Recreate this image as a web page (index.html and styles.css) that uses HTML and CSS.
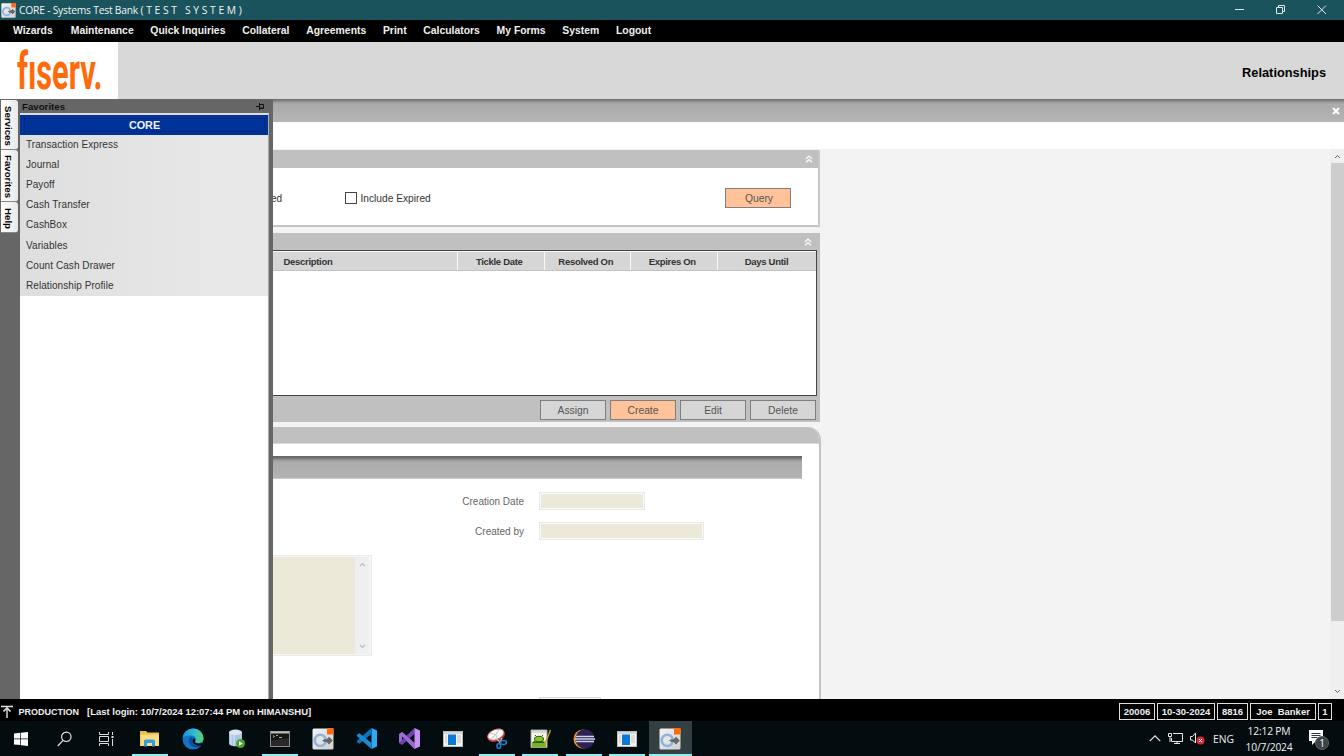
FILE: index.html
```html
<!DOCTYPE html>
<html lang="en">
<head>
  <meta charset="UTF-8">
  <title>CORE - Systems Test Bank</title>
  <link rel="stylesheet" href="styles.css">
</head>
<body>
  <svg width="0" height="0" class="defs">
    <defs>
      <linearGradient id="edgeGreen" x1="0" y1="0" x2="1" y2="0">
        <stop offset="0" stop-color="#1b8fd8"/><stop offset=".6" stop-color="#35bdd0"/><stop offset="1" stop-color="#5fd45a"/>
      </linearGradient>
      <linearGradient id="coreGrey" x1="0" y1="0" x2="1" y2="1">
        <stop offset="0" stop-color="#f4f4f4"/><stop offset="1" stop-color="#cfcfcf"/>
      </linearGradient>
      <symbol id="core" viewBox="0 0 22 22">
        <rect x=".5" y=".5" width="21" height="21" rx="1.5" fill="url(#coreGrey)"/>
        <circle cx="8.3" cy="12.4" r="5.6" fill="none" stroke="#8fb4dc" stroke-width="2.6"/>
        <path d="M10 12.500 13 11l1.500.5 2.500-2.700 3.800 3.700-3.800 3.900-2.500-2.600-1.500.5z" fill="#666"/>
        <rect x="15" y="0" width="6.500" height="6.500" fill="#ff6a0a"/>
      </symbol>
      <symbol id="window" viewBox="0 0 20 16">
        <rect x=".5" y=".5" width="19" height="15" fill="#f3f3f3" stroke="#bcbcbc"/>
        <rect x="1" y="1" width="18" height="2" fill="#d5d5d5"/>
        <rect x="5" y="3.500" width="8" height="10.500" fill="#0f78d4"/>
        <path d="M2 5h2M2 7h2M2 9h2M2 11h2M14 5h4M14 7h4M14 9h4M14 11h4" stroke="#c4c4c4"/>
      </symbol>
      <symbol id="chevrons" viewBox="0 0 8 8">
        <path d="M1 3.700 4 1l3 2.700M1 7.200 4 4.500l3 2.700" fill="none" stroke="#fff" stroke-width="1.300"/>
      </symbol>
    </defs>
  </svg>

  <div class="titlebar">
    <svg class="app-icon" width="15" height="15"><use href="#core"/></svg>
    <span class="title">CORE - Systems Test Bank <span class="spaced">( T E S T &nbsp; S Y S T E M )</span></span>
    <svg class="window-buttons" width="110" height="20" fill="none" stroke="#dfe8ea">
      <path d="M1 9.500h9M42.500 7.500h6v6h-6zM44.500 7.500v-2h6v6h-2M83.500 5.500l8.500 8.500M92 5.500 83.500 14"/>
    </svg>
  </div>

  <div class="menubar">
    <span>Wizards</span><span>Maintenance</span><span>Quick Inquiries</span><span>Collateral</span><span>Agreements</span><span>Print</span><span>Calculators</span><span>My Forms</span><span>System</span><span>Logout</span>
  </div>

  <div class="brand">
    <div class="logo"><span>fıserv.</span></div>
    <h1>Relationships</h1>
  </div>

  <div class="workspace">
    <div class="rail">
      <div class="tab services">Services</div>
      <div class="tab favs">Favorites</div>
      <div class="tab help">Help</div>
    </div>

    <div class="favorites">
      <div class="fav-head">
        <span>Favorites</span>
        <svg width="8" height="7" fill="none" stroke="#111"><path d="M0 3.500h3M3.500 0v7M3.500 1.500h4v3.500h-4M3.500 5.500h4"/></svg>
      </div>
      <div class="fav-body">
        <div class="fav-title"><span>CORE</span></div>
        <ul>
          <li>Transaction Express</li>
          <li>Journal</li>
          <li>Payoff</li>
          <li>Cash Transfer</li>
          <li>CashBox</li>
          <li>Variables</li>
          <li>Count Cash Drawer</li>
          <li>Relationship Profile</li>
        </ul>
      </div>
    </div>

    <div class="main">
      <div class="main-bar">
        <svg width="8" height="8" stroke="#fff" stroke-width="2"><path d="M1 1l6 6M7 1 1 7"/></svg>
      </div>
      <div class="blank"></div>
      <div class="scroll-area">
        <div class="panels">
          <div class="panel filter">
            <div class="panel-head"><svg width="8" height="8"><use href="#chevrons"/></svg></div>
            <div class="filter-row">
              <span class="cut">ed</span>
              <span class="check"></span>
              <span class="check-label">Include Expired</span>
              <span class="btn primary">Query</span>
            </div>
          </div>

          <div class="panel list">
            <div class="panel-head"><svg width="8" height="8"><use href="#chevrons"/></svg></div>
            <div class="grid">
              <div class="grid-head">
                <div class="desc">Description</div>
                <div>Tickle Date</div>
                <div>Resolved On</div>
                <div>Expires On</div>
                <div>Days Until</div>
              </div>
            </div>
            <div class="actions">
              <span class="btn">Assign</span>
              <span class="btn primary">Create</span>
              <span class="btn">Edit</span>
              <span class="btn">Delete</span>
            </div>
          </div>

          <div class="detail">
            <div class="detail-head"></div>
            <div class="section-bar"></div>
            <div class="field first"><label>Creation Date</label><div class="input"></div></div>
            <div class="field"><label>Created by</label><div class="input wide"></div></div>
            <div class="textarea">
              <div class="text"></div>
              <div class="text-scroll">
                <svg width="7" height="5" fill="none" stroke="#bbb" stroke-width="1.200"><path d="M1 4l2.500-2.500L6 4"/></svg>
                <svg width="7" height="5" fill="none" stroke="#bbb" stroke-width="1.200"><path d="M1 1l2.500 2.500L6 1"/></svg>
              </div>
            </div>
            <div class="stub"></div>
          </div>
        </div>

        <div class="scrollbar">
          <svg width="7" height="5" fill="none" stroke="#666"><path d="M1 4l2.500-2.500L6 4"/></svg>
          <div class="thumb"></div>
          <svg width="7" height="5" fill="none" stroke="#666"><path d="M1 1l2.500 2.500L6 1"/></svg>
        </div>
      </div>
    </div>
  </div>

  <div class="statusbar">
    <svg width="14" height="14" fill="none" stroke="#e4e4e4"><path d="M1 1.500h12M7 3v10" stroke-width="1.400"/><path d="M3.500 6.500 7 3l3.500 3.500" stroke-width="1.600"/></svg>
    <span class="env">PRODUCTION</span>
    <span class="login">[Last login: 10/7/2024 12:07:44 PM on HIMANSHU]</span>
    <div class="boxes">
      <span class="b1">20006</span><span class="b2">10-30-2024</span><span class="b3">8816</span><span class="b4">Joe&nbsp; Banker</span><span class="b5">1</span>
    </div>
  </div>

  <div class="taskbar">
    <div class="task sys"><svg width="14" height="14" fill="#fff"><path d="M0 1.500 6.300.8v5.800H0zM7 .7 14 0v6.600H7zM0 7.300h6.300v5.800L0 12.400zM7 7.300h7V14l-7-.8z"/></svg></div>
    <div class="task sys"><svg width="15" height="16" fill="none" stroke="#e6e6e6" stroke-width="1.200"><circle cx="9.300" cy="5.800" r="4.700"/><path d="M6 9.300.8 15"/></svg></div>
    <div class="task sys"><svg width="15" height="14" fill="none" stroke="#ddd"><path d="M.5 0v2.500h9V0M.5 4.500h9v5h-9zM.5 14v-2.500h9V14M13.500 0v3M13.500 7v7"/><path d="M12.500 5h2" stroke-width="2"/></svg></div>
    <div class="task open">
      <svg width="20" height="17"><path d="M0 1h6l1.500 1.500H19V16H0z" fill="#f0bd45"/><path d="M.5 4.500h18.500V16H.500z" fill="#fbdc80"/><path d="M4 16.500V11q0-1.500 1.500-1.500h8Q15 9.500 15 11v5.500h-3V13H7v3.500z" fill="#2f9fe0"/></svg>
    </div>
    <div class="task">
      <svg width="22" height="22" viewBox="0 0 22 22"><circle cx="11" cy="11" r="10.500" fill="#1673c4"/><path d="M.6 10C1.500 4 6 .5 11 .5 17 .5 21.500 5 21.500 10c0 3.500-2.500 5-5.300 5-2.500 0-3.200-1-2.700-2 1.500-3-1-5.500-4.500-5.500-4 0-7.500 1-8.400 2.500z" fill="url(#edgeGreen)"/><path d="M8.500 9C5.500 12 7 18.500 13 19.300c2.500.3 5-.6 6.500-2-5 1.300-9.500-1-9.500-4.300 0-1 .4-1.600.8-2.200-.3-1.300-1.200-2-2.300-1.800z" fill="#0b4f9c"/><path d="M10.500 12.500c.3-2 1.800-2.300 2.500-1.500.8.900.1 2-.2 2.500-.3 1.200 1.500 2.200 4.500 2l4-1-1.500 2.800c-4 1.500-9.300-.8-9.300-4.800z" fill="#030d10"/></svg>
    </div>
    <div class="task">
      <svg width="18" height="20"><path d="M1 3.500v11c0 1.500 3 2.700 6.500 2.700s6.500-1.200 6.500-2.700v-11z" fill="#a9c5e2"/><path d="M3 4v12M6 5v12" stroke="#c9dcf0" stroke-width="1.500"/><ellipse cx="7.500" cy="3.300" rx="6.500" ry="2.700" fill="#dbe7f3"/><circle cx="12.500" cy="14.500" r="4.500" fill="#49a52f"/><path d="M11 12.200v4.600l3.800-2.300z" fill="#fff"/></svg>
    </div>
    <div class="task open">
      <svg width="20" height="16"><rect x=".5" y=".5" width="19" height="15" fill="#151515" stroke="#8d8d8d"/><path d="M1 1.500h18" stroke="#bcbcbc" stroke-width="2"/><path d="M3 4.500l1.500 1L3 6.500M6 4.500h2M9 6.500h3" fill="none" stroke="#ccc" stroke-width=".8"/><path d="M1 9.500 19 7v8H1z" fill="#292929"/></svg>
    </div>
    <div class="task"><svg width="22" height="22"><use href="#core"/></svg></div>
    <div class="task">
      <svg width="22" height="21"><path d="M15.500 0 21 2.500v16L15.500 21z" fill="#2faaf2"/><path d="M15.500 0v6L3.500 15.700 1 14.300v-1.500z" fill="#0875bd"/><path d="M15.500 21v-6L3.500 5.300 1 6.700v1.500z" fill="#168bd6"/></svg>
    </div>
    <div class="task">
      <svg width="22" height="21"><path d="M0 6l3-2 12.500 11v6L3 8.500v5.500l-3 1z" fill="#9a6bd6"/><path d="M15.500 0v6L3 17 0 15l3-3z" fill="#7341b1"/><path d="M3 4l12.500 11v6L1.500 6z" fill="#9a6bd6"/><path d="M15.500 0 21 2.500v16L15.500 21z" fill="#c693f4"/></svg>
    </div>
    <div class="task"><svg width="20" height="16"><use href="#window"/></svg></div>
    <div class="task open">
      <svg width="22" height="21"><g transform="rotate(-22 10 7)"><ellipse cx="10" cy="8" rx="9" ry="5.500" fill="#b52b2b"/><ellipse cx="10" cy="6.500" rx="8.500" ry="5" fill="#f8f8f8" stroke="#d66"/><path d="M10 6.500 5 3M10 6.500 15 3M10 6.500v5M10 6.500 3 9" stroke="#bbb" stroke-width=".8"/></g><path d="M9.500 10.500l5.500 4M16 10l-3 6" stroke="#bbb" stroke-width="1.500"/><g fill="none" stroke="#1e7ec1" stroke-width="1.600"><ellipse cx="17.500" cy="14.500" rx="3" ry="2"/><ellipse cx="12.800" cy="18" rx="1.800" ry="2.500"/></g></svg>
    </div>
    <div class="task open">
      <svg width="21" height="20"><path d="M1 1h16v17.500H1z" fill="#f4f6ef" stroke="#9aa18e"/><path d="M2 3h14" stroke="#ccc" stroke-width="1.500"/><path d="M2 13q6-4 14 0v5H2z" fill="#74b51f"/><ellipse cx="9" cy="10" rx="4.500" ry="2.700" fill="#83c72c" stroke="#325818"/><path d="M4 13.500h10M5 12l-2 2M12 12l2 2M6 7l-1-1M12 7l1-1" stroke="#325818"/><path d="M20.500 1 14.500 16" stroke="#c79b2d" stroke-width="1.500"/></svg>
    </div>
    <div class="task open">
      <svg width="22" height="20"><circle cx="10" cy="10" r="9.500" fill="#f0962e"/><circle cx="12" cy="10" r="9.700" fill="#2c2255"/><path d="M3 7.500h18M2 10h20M3 12.500h18" stroke="#cfd0e4" stroke-width="1.400"/></svg>
    </div>
    <div class="task open"><svg width="20" height="16"><use href="#window"/></svg></div>
    <div class="task open current"><svg width="22" height="22"><use href="#core"/></svg></div>

    <div class="tray">
      <svg width="12" height="7" fill="none" stroke="#e8e8e8" stroke-width="1.200"><path d="M.7 6.200 6 .9l5.300 5.300"/></svg>
      <svg width="15" height="13" fill="none" stroke="#e8e8e8"><path d="M5 1.500h9.500v8H3.500V6M6 11.500h6M9 9.500v2M.5 1.500h3v3h-3zM2 5v5"/></svg>
      <svg width="15" height="13"><path d="M.5 4.500h2L5.500 1v10L2.500 8h-2z" fill="none" stroke="#e8e8e8"/><circle cx="10.500" cy="8.500" r="4" fill="#e22b3a"/><path d="M9 7l3 3M12 7l-3 3" stroke="#fff"/></svg>
      <span class="lang">ENG</span>
      <div class="clock"><span>12:12 PM</span><span>10/7/2024</span></div>
      <div class="notice">
        <svg width="14" height="16"><path d="M0 0h14v11H7l-4 4v-4H0z" fill="#fff"/><path d="M2.500 3.500h9M2.500 5.500h9M2.500 7.500h6" stroke="#1b2527" stroke-width=".9"/></svg>
        <span class="badge">1</span>
      </div>
    </div>
  </div>
</body>
</html>
```
FILE: styles.css
```css
* {
  box-sizing: border-box;
}
body {
  margin: 0;
  width: 1344px;
  height: 756px;
  overflow: hidden;
  display: flex;
  flex-direction: column;
  font-family: "Liberation Sans", Arial, sans-serif;
  font-size: 10px;
  color: #333;
  white-space: nowrap;
}
svg {
  display: block;
  flex: none;
}
.defs {
  position: absolute;
}

/* window title */
.titlebar {
  height: 20px;
  flex: none;
  display: flex;
  align-items: center;
  padding-left: 1px;
  background: #1b535c;
  color: #f0f4f5;
  font-family: "Open Sans", sans-serif;
  font-size: 10.3px;
}
.title {
  margin-left: 3px;
  letter-spacing: -0.22px;
}
.spaced {
  letter-spacing: 0;
}
.window-buttons {
  margin-left: auto;
}

.menubar {
  height: 22px;
  flex: none;
  display: flex;
  align-items: center;
  gap: 16.7px;
  padding: 0 0 1px 13px;
  background: #000;
  color: #f0f0f0;
  font-size: 10.4px;
  font-weight: bold;
}
.menubar span:first-child {
  margin-right: 1.3px;
}

.brand {
  height: 57px;
  flex: none;
  display: flex;
  align-items: center;
  justify-content: space-between;
  background: #d8d8d8;
  padding-right: 18px;
}
.logo {
  width: 118px;
  height: 57px;
  padding-left: 17px;
  background: #fff;
  color: #ff6a0a;
}
.logo span {
  display: block;
  width: 142px;
  font-family: "Roboto", sans-serif;
  font-weight: bold;
  font-size: 52px;
  line-height: 60px;
  transform: scaleX(0.59);
  transform-origin: left;
}
.brand h1 {
  margin: 3px 0 0;
  font-size: 12.8px;
  color: #000;
}

.workspace {
  height: 600px;
  flex: none;
  display: flex;
  background: #fff;
}

/* left tabs */
.rail {
  width: 20px;
  flex: none;
  background: #666;
  padding-top: 1px;
}
.tab {
  width: 17px;
  margin-left: 1px;
  writing-mode: vertical-rl;
  display: flex;
  align-items: flex-start;
  justify-content: center;
  padding: 2px 3px 0 0;
  line-height: 13px;
  background: linear-gradient(to right, #fff, #e8e8e8);
  border-bottom: 1px solid #888;
  border-radius: 0 3px 3px 0;
  color: #000;
  font-size: 9.7px;
  font-weight: bold;
}
.services {
  height: 50px;
}
.favs {
  height: 52px;
}
.help {
  height: 31px;
}

.favorites {
  width: 253px;
  flex: none;
  display: flex;
  flex-direction: column;
  background: #666;
  padding-right: 4px;
}
.fav-head {
  height: 14px;
  flex: none;
  display: flex;
  align-items: center;
  justify-content: space-between;
  padding: 0 5px 0 2px;
  font-size: 9.7px;
  font-weight: bold;
  color: #111;
}
.fav-body {
  flex: 1;
  background: #fff;
  border-top: 2px solid #ddd;
  border-right: 1px solid #aaa;
}
.fav-title {
  height: 20px;
  padding: 3px 3px 2px 4px;
  background: #003399;
  color: #f2f2f2;
  font-size: 10.8px;
  font-weight: bold;
  text-align: center;
}
.fav-title span {
  display: block;
  height: 14px;
  line-height: 12px;
  border: 1px dotted #001b5c;
}
.favorites ul {
  list-style: none;
  margin: 0;
  padding: 0;
  background: linear-gradient(to right, #dedede, #e8e8e8 80%);
}
.favorites li {
  height: 20.12px;
  line-height: 20.6px;
  padding-left: 6px;
  letter-spacing: 0.07px;
}

/* content */
.main {
  flex: 1;
  min-width: 0;
  display: flex;
  flex-direction: column;
}
.main-bar {
  height: 23px;
  flex: none;
  display: flex;
  align-items: center;
  justify-content: flex-end;
  padding-right: 4px;
  background: linear-gradient(#666 0, #777 1px, #999 3px, #ababab 5px, #b5b5b5);
}
.blank {
  height: 27px;
  flex: none;
}
.scroll-area {
  flex: 1;
  min-height: 0;
  display: flex;
  justify-content: space-between;
  overflow: hidden;
  background: #f3f3f3;
}
.panels {
  width: 548px;
  padding-top: 1px;
}
.panel {
  border-right: 1px solid #c0c0c0;
}
.panel-head {
  height: 18px;
  display: flex;
  align-items: center;
  justify-content: flex-end;
  padding-right: 7px;
  background: #c0c0c0;
}
.filter .panel-head {
  padding-right: 5px;
}
.filter {
  width: 547px;
  height: 77px;
  background: #fff;
  border-right: 2px solid #c8c8c8;
  border-bottom: 2px solid #c4c4c4;
}
.filter-row {
  display: flex;
  align-items: center;
  height: 60px;
}
.cut {
  width: 72px;
  margin-left: -2px;
}
.check {
  width: 12px;
  height: 12px;
  margin-left: 2px;
  background: #fff;
  border: 1px solid #444;
}
.check-label {
  margin-left: 3.5px;
  font-size: 10.2px;
}
.filter .btn {
  margin-left: auto;
  margin-right: 27px;
  padding-left: 2px;
  line-height: 20px;
}
.btn {
  width: 66px;
  height: 20px;
  line-height: 19px;
  background: #d6d6d6;
  border: 1px solid #7f7f7f;
  text-align: center;
  color: #555;
  font-size: 10.3px;
}
.primary {
  background: #ffc299;
}
.list {
  width: 547px;
  height: 189px;
  margin-top: 6px;
  background: #c0c0c0;
}
.list .panel-head {
  height: 17px;
}
.grid {
  width: 544px;
  height: 146px;
  background: #fff;
  border: 1px solid #444;
  border-left: 0;
}
.grid-head {
  display: flex;
  height: 20px;
  line-height: 20px;
  background: #d6d6d6;
  border-top: 1px solid #f5f5f5;
  border-bottom: 1px solid #c2c2c2;
  font-size: 9.5px;
  letter-spacing: -0.3px;
  font-weight: bold;
  text-align: center;
}
.grid-head div {
  width: 86.5px;
  padding-right: 3px;
  border-left: 1px solid #f8f8f8;
}
.grid-head div:last-child {
  width: 99px;
  padding-right: 0;
}
.grid-head .desc {
  width: 184px;
  padding-left: 10.5px;
  border: 0;
  text-align: left;
}
.actions {
  display: flex;
  justify-content: flex-end;
  gap: 4px;
  padding: 4px 3px 0 0;
}

.detail {
  width: 548px;
  height: 290px;
  margin-top: 5px;
  background: #fff;
  border-right: 2px solid #c4c4c4;
  border-top-right-radius: 13px;
  overflow: hidden;
}
.detail-head {
  height: 17px;
  background: #c0c0c0;
  border-bottom: 1px solid #d8d8d8;
}
.section-bar {
  width: 529px;
  height: 23px;
  margin-top: 12px;
  background: linear-gradient(#666 0, #707070 2px, #999 4px, #ababab 6px, #b3b3b3);
  border-bottom: 1px solid #c8c8c8;
}
.field {
  display: flex;
  align-items: center;
  height: 18px;
  margin-top: 12px;
  color: #666;
}
.field.first {
  margin-top: 13px;
}
.field label {
  width: 251px;
  text-align: right;
}
.input {
  width: 106px;
  height: 18px;
  margin-left: 15px;
  background: #ece9d8;
  border: 1px solid #e9e9e9;
  box-shadow: inset 0 0 0 1px #fafafa;
}
.input.wide {
  width: 165px;
}
.textarea {
  display: flex;
  width: 99px;
  height: 101px;
  margin-top: 15px;
  padding: 1px 1px 1px 0;
  border: 1px solid #ebebeb;
  border-left: 0;
  background: #f5f5f5;
}
.text {
  width: 82px;
  background: #ece9d8;
}
.text-scroll {
  width: 14px;
  display: flex;
  flex-direction: column;
  justify-content: space-between;
  align-items: center;
  padding: 5px 0;
  background: #efefef;
}
.stub {
  width: 62px;
  height: 10px;
  margin: 41px 0 0 266px;
  background: #f5f5f5;
  border: 1px solid #ddd;
}
.scrollbar {
  width: 14px;
  display: flex;
  flex-direction: column;
  align-items: center;
  padding: 5px 0;
  background: #efefef;
}
.thumb {
  width: 13px;
  height: 458px;
  margin: 4px 0 auto;
  background: #cdcdcd;
}

.statusbar {
  height: 22px;
  flex: none;
  display: flex;
  align-items: center;
  padding: 3px 12px 0 0;
  background: #000;
  color: #f0f0f0;
  font-weight: bold;
  font-size: 9.47px;
}
.env {
  margin-left: 4.5px;
  font-size: 9px;
}
.login {
  margin-left: 8px;
}
.boxes {
  display: flex;
  gap: 2px;
  margin-left: auto;
}
.boxes span {
  height: 17px;
  line-height: 16px;
  border: 1px solid #ddd;
  text-align: center;
}
.b1 { width: 36px; }
.b2 { width: 58px; }
.b3 { width: 31px; }
.b4 { width: 66px; }
.b5 { width: 14px; }

/* windows taskbar */
.taskbar {
  height: 35px;
  flex: none;
  display: flex;
  background: #030d10;
  color: #f0f0f0;
  font-family: "Open Sans", sans-serif;
}
.task {
  width: 43.4px;
  display: flex;
  align-items: center;
  justify-content: center;
  background: linear-gradient(#8af0f5, #8af0f5) center bottom / 0 2px no-repeat;
}
.task.sys {
  width: 42.7px;
}
.open {
  background-size: 36px 2px;
}
.current {
  background-color: #343f42;
  background-size: 43px 2px;
}
.tray {
  display: flex;
  align-items: center;
  margin-left: auto;
  padding-right: 14px;
  font-size: 10.3px;
}
.tray > svg {
  margin-right: 7px;
}
.lang {
  margin-left: 1px;
}
.clock {
  display: flex;
  flex-direction: column;
  align-items: center;
  width: 50px;
  margin-left: 10px;
  line-height: 16px;
  letter-spacing: -0.2px;
}
.notice {
  position: relative;
  margin-left: 15px;
  width: 21px;
  height: 17px;
}
.badge {
  position: absolute;
  left: 6px;
  top: 6px;
  width: 14px;
  height: 14px;
  border-radius: 50%;
  text-align: center;
  background: #3a4446;
  border: 1px solid #5b6466;
  color: #fff;
  line-height: 12px;
  font-size: 10px;
}
```
